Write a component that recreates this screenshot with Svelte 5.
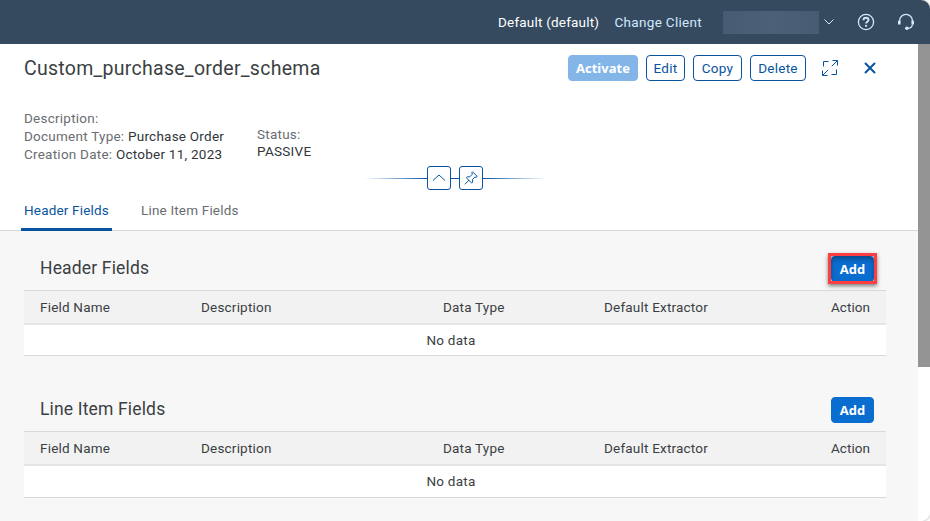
<script>
  const columns = ['Field Name', 'Description', 'Data Type', 'Default Extractor', 'Action'];
  const sections = [
    { title: 'Header Fields', highlighted: true },
    { title: 'Line Item Fields', highlighted: false }
  ];
</script>

<div class="app">
  <header class="shell">
    <span class="tenant">Default (default)</span>
    <span class="change">Change Client</span>
    <span class="client"></span>
    <svg class="chev" width="12" height="8" viewBox="0 0 12 8"><path d="M1.500 1.500 6 6l4.500-4.500" /></svg>
    <svg class="help" width="18" height="18" viewBox="0 0 18 18"><circle cx="9" cy="9" r="7.600" /><path class="q" d="M6.500 7.200c0-1.600 1-2.400 2.500-2.400s2.500.8 2.500 2.200c0 1.800-2.400 1.700-2.400 3.600" /><circle class="dot" cx="9.100" cy="12.800" r="1.100" /></svg>
    <svg class="headset" width="18" height="18" viewBox="0 0 18 18"><path d="M2.600 9V7.800a6.400 6.400 0 0 1 12.800 0V9" /><path class="ear" d="M2.300 7.800v3.700M15.700 7.800v3.700" /><path d="M15.500 11.500c-.3 2.200-2 3.700-4.500 3.900" /><circle class="dot" cx="9.900" cy="15.300" r="1.800" /></svg>
  </header>

  <div class="body">
    <main>
      <section class="head">
        <div class="titlebar">
          <h1>Custom_purchase_order_schema</h1>
          <button class="btn activate" disabled>Activate</button>
          <button class="btn edit">Edit</button>
          <button class="btn copy">Copy</button>
          <button class="btn delete">Delete</button>
          <svg class="full" width="16" height="16" viewBox="0 0 16 16"><path d="M6.500 1.500h-5v5M14.500 9.500v5h-5M10.500.5h5v5M15.200.8 9.800 6.200M.5 10.500v5h5M.8 15.200l5.400-5.400" /></svg>
          <svg class="close" width="12" height="12" viewBox="0 0 12 12"><path d="m1 1 10 10M11 1 1 11" /></svg>
        </div>
        <div class="facts">
          <div class="info">
            <div>Description:</div>
            <div>Document Type: <b>Purchase Order</b></div>
            <div>Creation Date: <b>October 11, 2023</b></div>
          </div>
          <div class="status">
            <div>Status:</div>
            <div class="value"><b>PASSIVE</b></div>
          </div>
        </div>
        <div class="divider">
          <i class="line left"></i>
          <span class="sq"><svg width="14" height="14" viewBox="0 0 14 14"><path d="m1 9.500 6-5.500 6 5.500" /></svg></span>
          <i class="line mid"></i>
          <span class="sq"><svg width="14" height="14" viewBox="0 0 14 14"><path d="M8.600.8 13.200 5.400 12 6.300l-1.200-.2-2.300 2.500.2 2.600-1 .9-5.400-5.400.9-.9 2.500.1L8.200 3.400 7.900 1.700ZM5 9.100.8 13.300" /></svg></span>
          <i class="line right"></i>
        </div>
        <nav>
          <span class="tab active">Header Fields</span>
          <span class="tab">Line Item Fields</span>
        </nav>
      </section>

      <div class="tables">
        {#each sections as s}
          <section class="block">
            <div class="bar">
              <h2>{s.title}</h2>
              <div class="addwrap">
                <button class="btn add">Add</button>
                {#if s.highlighted}<span class="mark"></span>{/if}
              </div>
            </div>
            <div class="thead">
              {#each columns as c, i}<span class="c{i}">{c}</span>{/each}
            </div>
            <div class="empty">No data</div>
          </section>
        {/each}
      </div>
    </main>
    <div class="track"><div class="thumb"></div></div>
  </div>
</div>

<style>
  :global(body) { margin: 0; background: #fff; overflow: hidden; }
  .app { width: 930px; height: 521px; overflow: hidden; border-radius: 0 9px 9px 0; font: 13.5px/18px Roboto, "Liberation Sans", sans-serif; letter-spacing: .24px; color: #3b3f43; box-shadow: 0 0 3px #999; }
  * { box-sizing: border-box; }
  svg { fill: none; flex: none; display: block; }
  b { font-weight: 400; color: #32363a; }
  .shell { height: 44px; background: #354a5f; display: flex; align-items: center; padding-right: 15px; justify-content: flex-end; color: #fff; }
  .shell svg { stroke: #d1e8ff; stroke-width: 1.3; }
  .tenant { width: 116.5px; white-space: nowrap; letter-spacing: .2px; }
  .change { width: 108.5px; color: #d1e8ff; white-space: nowrap; letter-spacing: .31px; }
  .client { width: 96px; height: 23px; background: linear-gradient(90deg, #475c73, #4b6178 50%, #475c73); margin-right: 4px; }
  .shell .chev { margin-right: 22px; stroke-width: 1; }
  .help { margin-right: 22px; }
  .shell .dot { fill: #d1e8ff; stroke: none; }
  .shell .q { stroke-width: 1.9; }
  .shell .ear { stroke-width: 2.6; }
  .body { display: flex; height: 477px; }
  main { width: 918px; background: #f7f7f7; }
  .track { width: 12px; background: #fff; }
  .thumb { height: 323px; background: #949494; }
  .head { height: 187px; background: #fff; border-bottom: 1px solid #d9d9d9; display: flex; flex-direction: column; }
  .titlebar { height: 48px; display: flex; align-items: center; padding-left: 24px; }
  h1 { font-size: 19.5px; font-weight: 400; margin: 0; width: 544px; line-height: 24px; letter-spacing: .27px; padding-top: 2px; }
  h2 { font-size: 17.5px; font-weight: 400; margin: 0; line-height: 24px; letter-spacing: .16px; }
  .btn { height: 26px; font: inherit; letter-spacing: inherit; padding: 1px 0 0; border: 1px solid #0854a0; border-radius: 4px; background: #fff; color: #0854a0; margin: 0 8px 0 0; flex: none; text-align: center; }
  .activate, .add { font: 700 13px/18px "Open Sans", "Noto Sans", sans-serif; letter-spacing: 0; color: #fff; padding: 0 0 1px; }
  .activate { width: 70px; background: #84b5e8; border-color: #84b5e8; padding: 1px 0 0; }
  .edit { width: 39px; }
  .copy { width: 49px; }
  .delete { width: 56px; margin-right: 16px; }
  .full { stroke: #0854a0; margin-right: 26px; }
  .close { stroke: #0854a0; stroke-width: 2; }
  .facts { display: flex; padding: 17px 24px 0; color: #6a6d70; height: 74px; }
  .info { width: 233px; white-space: nowrap; }
  .status { padding-top: 17px; line-height: 17px; }
  .value { letter-spacing: .28px; }
  .divider { height: 26px; display: flex; align-items: center; padding-left: 364px; }
  .line { height: 1px; background: #0854a0; }
  .left { width: 63px; background: linear-gradient(90deg, #fff, #0854a0); }
  .mid { width: 8px; }
  .right { width: 63px; background: linear-gradient(90deg, #0854a0, #fff); }
  .sq { width: 24px; height: 24px; border: 1px solid #0854a0; border-radius: 3px; display: flex; align-items: center; justify-content: center; }
  .sq svg { stroke: #0854a0; }
  nav { display: flex; padding-left: 21px; height: 39px; }
  .tab { height: 39px; padding: 10px 3px 0; color: #6a6d70; white-space: nowrap; letter-spacing: .18px; }
  .active { width: 91px; flex: none; margin-right: 26px; color: #0854a0; border-bottom: 2px solid #0854a0; border-radius: 2px 2px 0 0; box-shadow: 0 1px 0 #0854a0; }
  .tables { padding: 15px 32px 0 24px; }
  .block { height: 141px; }
  .bar { height: 44px; display: flex; align-items: center; justify-content: space-between; padding: 0 12px 0 16px; }
  .addwrap { position: relative; height: 26px; margin-top: 2px; }
  .add { width: 43px; margin: 0; background: #0a6ed1; border-color: #0a6ed1; display: block; }
  .mark { position: absolute; left: -3px; top: -3px; width: 49px; height: 31px; border: 3px solid #fc3d42; box-shadow: 0 2px 4px rgba(0,0,0,.5), inset 0 3px 5px rgba(0,0,0,.35); }
  .thead { height: 35px; border-top: 1px solid #d9d9d9; border-bottom: 2px solid #e5e5e5; background: #f2f2f2; display: flex; align-items: center; padding: 0 16px 1px; letter-spacing: .2px; }
  .c0, .c2 { width: 161px; }
  .c1 { width: 242px; }
  .c4 { margin-left: auto; letter-spacing: .05px; }
  .empty { height: 31px; background: #fff; border-bottom: 1px solid #d9d9d9; text-align: center; line-height: 30px; padding-right: 8px; }
  .block:last-child .empty { height: 32px; }
</style>
